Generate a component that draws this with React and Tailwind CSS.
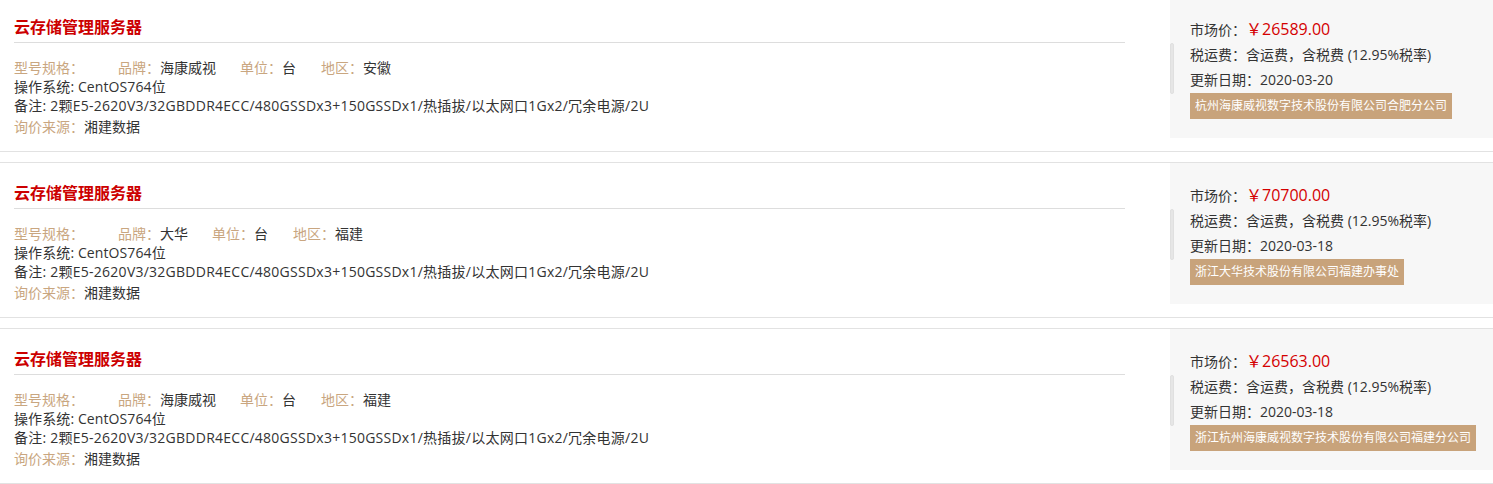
import React from "react";

const items = [
  { brand: "海康威视", region: "安徽", price: "26589.00", date: "2020-03-20", company: "杭州海康威视数字技术股份有限公司合肥分公司" },
  { brand: "大华", region: "福建", price: "70700.00", date: "2020-03-18", company: "浙江大华技术股份有限公司福建办事处" },
  { brand: "海康威视", region: "福建", price: "26563.00", date: "2020-03-18", company: "浙江杭州海康威视数字技术股份有限公司福建分公司" },
];

const label = "text-[#c9a680]";

function Card({ it }) {
  return (
    <div className="flex border-y border-[#e2e2e2] mb-[10px]">
      <div className="w-[1125px] pl-[14px] pt-[18px] pb-[15px] shrink-0">
        <div className="h-[24px] leading-[24px] text-[16px] font-bold text-[#cc0000] pb-[3px] box-content border-b border-[#dddddd]">
          云存储管理服务器
        </div>
        <div className="pt-[15px] text-[14px] leading-[19px] text-[#333]">
          <div className="flex h-[19px] whitespace-nowrap">
            <span className={label}>型号规格：</span>
            <span className="ml-[34px]"><span className={label}>品牌：</span>{it.brand}</span>
            <span className="ml-[24px]"><span className={label}>单位：</span>台</span>
            <span className="ml-[25px]"><span className={label}>地区：</span>{it.region}</span>
          </div>
          <div className="h-[19px] whitespace-nowrap tracking-[0.1px]">操作系统: CentOS764位</div>
          <div className="h-[19px] whitespace-nowrap tracking-[0.25px]">备注: 2颗E5-2620V3/32GBDDR4ECC/480GSSDx3+150GSSDx1/热插拔/以太网口1Gx2/冗余电源/2U</div>
          <div className="h-[19px] mt-[2px] whitespace-nowrap"><span className={label}>询价来源：</span>湘建数据</div>
        </div>
      </div>
      <div className="ml-[45px] flex-1 self-start h-[141px] bg-[#f7f7f7] relative pl-[20px] pt-[20px] text-[14px] text-[#333]">
        <div className="absolute left-0 top-[46px] w-[4px] h-[51px] rounded-full bg-[#e6e6e6] border border-[#e0e0e0]" />
        <div className="h-[25px] leading-[25px] whitespace-nowrap">
          市场价：<span className="text-[#d40000] text-[16px]">￥{it.price}</span>
        </div>
        <div className="h-[25px] leading-[25px] whitespace-nowrap">税运费：含运费，含税费 (12.95%税率)</div>
        <div className="h-[25px] leading-[25px] whitespace-nowrap">更新日期：{it.date}</div>
        <div className="mt-[1px] inline-block h-[26px] leading-[26px] px-[5px] bg-[#c8a37b] text-white text-[12px] whitespace-nowrap">
          {it.company}
        </div>
      </div>
    </div>
  );
}

export default function App() {
  return (
    <div
      className="bg-white w-[1493px] h-[484px] overflow-hidden"
      style={{ fontFamily: '"Open Sans", "Noto Sans CJK SC", sans-serif' }}
    >
      <div className="-mt-[4px]">
        {items.map((it, i) => (
          <Card key={i} it={it} />
        ))}
      </div>
    </div>
  );
}
